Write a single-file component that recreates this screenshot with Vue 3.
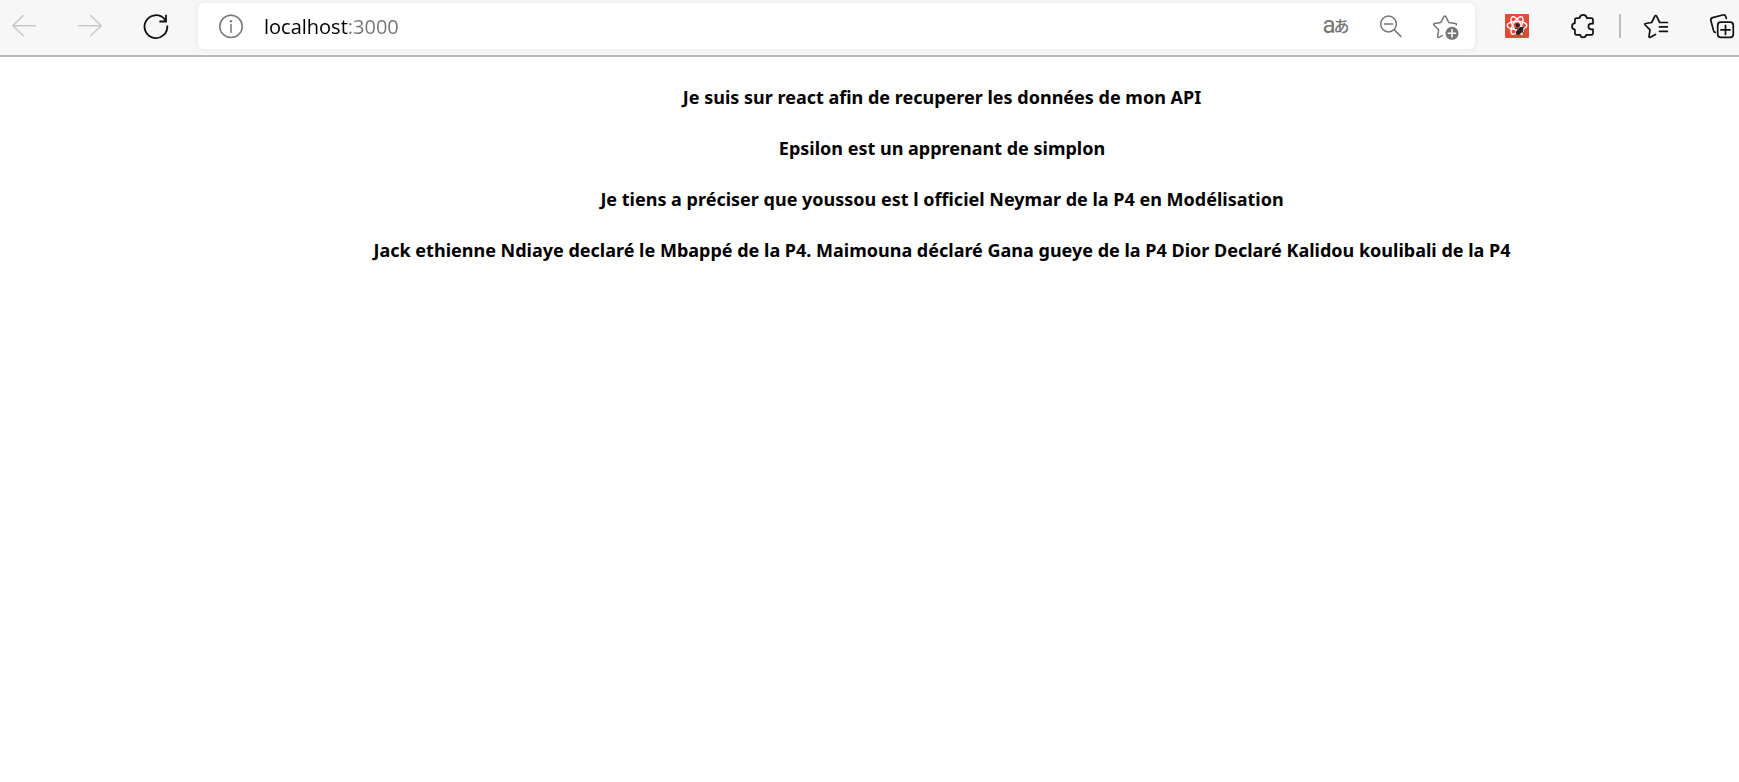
<script setup>
import { ref } from 'vue'

const address = ref('localhost:3000')

const messages = [
  'Je suis sur react afin de recuperer les données de mon API',
  'Epsilon est un apprenant de simplon',
  'Je tiens a préciser que youssou est l officiel Neymar de la P4 en Modélisation',
  'Jack ethienne Ndiaye declaré le Mbappé de la P4. Maimouna déclaré Gana gueye de la P4 Dior Declaré Kalidou koulibali de la P4',
]
</script>

<template>
  <div class="browser">
    <header class="toolbar">
      <nav class="history" aria-label="Navigation">
        <button type="button" class="tool" disabled aria-label="Back">
          <svg class="icon" viewBox="0 0 24 24"><path d="M23.5 11.7H.7M11.3 1.5.7 11.7l10.6 10" /></svg>
        </button>
        <button type="button" class="tool" disabled aria-label="Forward">
          <svg class="icon" viewBox="0 0 24 24"><path d="M.5 11.7h22.8M12.7 1.5l10.6 10.2-10.6 10" /></svg>
        </button>
        <button type="button" class="tool" aria-label="Refresh">
          <svg class="icon reload" viewBox="0 0 24 24">
            <path d="M23.3 11.5A11.4 11.4 0 1 1 20.6 5.2L22 7.3M22 .8v6.7h-6.6" />
          </svg>
        </button>
      </nav>

      <form class="omnibox" @submit.prevent>
        <button type="button" class="tool" aria-label="View site information">
          <svg class="icon info" viewBox="0 0 24 24">
            <circle cx="12" cy="12.4" r="11.2" /><path d="M12 10.5v7.8" /><circle class="dot" cx="12" cy="7.3" r="1.2" />
          </svg>
        </button>
        <input v-model="address" class="address" type="text" aria-label="Address" spellcheck="false" />
        <button type="button" class="tool translate" aria-label="Translate">
          <span class="latin">a</span><span class="kana">あ</span>
        </button>
        <button type="button" class="tool" aria-label="Zoom out">
          <svg class="icon" viewBox="0 0 24 24"><circle cx="9.5" cy="10" r="7.9" /><path d="M5.3 10h8.4M15.2 15.8l6.6 6.6" /></svg>
        </button>
        <button type="button" class="tool" aria-label="Add this page to favorites">
          <svg class="icon wide" viewBox="0 0 26 24">
            <path d="M9.2 21.6 6 23.4c-.8.4-1.5-.1-1.4-1l1-6.6-4.7-4.9c-.6-.6-.3-1.3.5-1.5l6.5-1 3.1-6c.4-.7 1.3-.7 1.7 0l3 6 6.7 1c.9.1 1.3.8.8 1.5" />
            <circle class="badge" cx="19" cy="19.3" r="6.5" /><path class="plus" d="M19 15.6V23M15.3 19.3h7.4" />
          </svg>
        </button>
      </form>

      <div class="extensions">
        <button type="button" class="tool" aria-label="React Developer Tools">
          <svg class="react" viewBox="0 0 24 24">
            <rect width="24" height="24" rx="1" fill="#dd4b39" />
            <g fill="none" stroke="#fff" stroke-width="1.4">
              <ellipse cx="12" cy="11.5" rx="9.9" ry="4" />
              <ellipse cx="12" cy="11.5" rx="9.9" ry="4" transform="rotate(60 12 11.5)" />
              <ellipse cx="12" cy="11.5" rx="9.9" ry="4" transform="rotate(120 12 11.5)" />
            </g>
            <g fill="#222" stroke="#222">
              <circle cx="12.6" cy="11.2" r="1.6" />
              <ellipse cx="14.6" cy="16.8" rx="1.9" ry="4.2" transform="rotate(40 14.6 16.8)" />
              <path fill="none" d="M10 14.7l3-.2M16.3 13.5h2.6M17 16.5l1.6 3.3M13.500 18.500l1.700 2.700" />
            </g>
          </svg>
        </button>
        <button type="button" class="tool" aria-label="Extensions">
          <svg class="icon dark" viewBox="0 0 24 24">
            <path d="M8.5 4.2C8.8 2.2 10.2.9 12.2.9s3.4 1.3 3.7 3.3h4.3c1.1 0 1.8.7 1.8 1.8v3.7h-1.5c-1.8 0-3.1 1.1-3.1 2.8s1.3 2.8 3.1 2.8H22V19c0 1.1-.7 1.8-1.8 1.8h-5c-.3 1.5-1.5 2.5-3 2.5s-2.7-1-3-2.5H5.7c-1.1 0-1.8-.7-1.8-1.8v-3.4C2 15.2 1 14 1 12.400s1-2.900 2.900-3.200V6c0-1.100.7-1.800 1.800-1.800z" />
          </svg>
        </button>
      </div>
      <span class="divider"></span>
      <div class="extensions">
        <button type="button" class="tool" aria-label="Favorites">
          <svg class="icon dark" viewBox="0 0 24 24">
            <path d="M11.5 20.4 6.4 23.2c-.8.4-1.5 0-1.4-.9l1-6.4L1.2 11c-.6-.6-.4-1.4.5-1.5l6-1 3.1-6.3c.4-.8 1.4-.8 1.8 0l3.1 6.3h7.8M15.5 12.9h7.8M15.500 17.400h7.800" />
          </svg>
        </button>
        <button type="button" class="tool" aria-label="Collections">
          <svg class="icon dark" viewBox="0 0 24 24">
            <path d="M5.3 18.4c-.9-.3-1.5-1-1.8-2L.9 6.7C.5 5.2 1.2 4 2.7 3.6l10-2.6c1.5-.4 2.7.2 3.2 1.7l.4 1.7" />
            <rect x="7.7" y="8.2" width="15.6" height="15.2" rx="3.2" /><path d="M15.5 11.3v9.2M10.9 15.9h9.2" />
          </svg>
        </button>
      </div>
    </header>

    <main class="page">
      <h4 v-for="message in messages" :key="message" class="message">{{ message }}</h4>
    </main>
  </div>
</template>

<style>
body {
  margin: 0;
  background: #fff;
}
</style>

<style scoped>
.browser {
  min-height: 100vh;
  color: #000;
  font-family: 'Segoe UI', 'Noto Sans', 'Noto Sans CJK JP', sans-serif;
}

.toolbar {
  display: flex;
  align-items: center;
  padding: 3px 5px 6px 12px;
  border-bottom: 2px solid #b9b9b9;
  background: #f7f7f7;
}

.history,
.extensions {
  display: flex;
  align-items: center;
  gap: 42px;
}

.tool {
  display: flex;
  flex: none;
  align-items: center;
  padding: 0;
  border: 0;
  background: none;
  color: #757575;
}

.history .tool,
.extensions .tool {
  color: #111;
}

.history .tool:disabled {
  color: #c9c9c9;
}

.icon,
.react {
  display: block;
  width: 24px;
  height: 24px;
}

.icon {
  overflow: visible;
  fill: none;
  stroke: currentColor;
  stroke-width: 1.5;
  stroke-linecap: round;
  stroke-linejoin: round;
}

.icon.wide {
  width: 26px;
}

.icon.dark {
  stroke-width: 1.7;
}

.icon.reload {
  stroke-width: 1.8;
  stroke-linecap: butt;
  stroke-linejoin: miter;
}

.dot,
.badge {
  fill: currentColor;
  stroke: none;
}

.plus {
  stroke: #fff;
}

.omnibox {
  display: flex;
  flex: 1;
  align-items: center;
  gap: 30px;
  min-width: 0;
  height: 46px;
  margin: 0 30px;
  padding: 0 16px 0 21px;
  box-sizing: border-box;
  border-radius: 6px;
  background: #fff;
  box-shadow: 0 0 6px rgba(0, 0, 0, 0.08);
}

.address {
  flex: 1;
  min-width: 0;
  margin-left: -9px;
  padding: 2px 0 0;
  border: 0;
  outline: 0;
  background: linear-gradient(to right, #000 84px, #757575 84px);
  background-clip: text;
  color: transparent;
  caret-color: #000;
  font: 20px/30px 'Segoe UI', 'Open Sans', sans-serif;
}

.translate {
  justify-content: center;
  width: 26px;
  height: 24px;
  padding-bottom: 2px;
}

.latin {
  font: 24px/24px Roboto, sans-serif;
}

.kana {
  margin-left: -2px;
  font: 500 16px/24px 'Noto Sans CJK JP', sans-serif;
}

.divider {
  width: 2px;
  height: 24px;
  margin: 0 23px 0 24px;
  background: #bdbdbd;
}

.page {
  display: grid;
  gap: 24px;
  padding: 27px 0 24px 145px;
}

.message {
  margin: 0;
  font-size: 18px;
  font-weight: 700;
  line-height: 27px;
  text-align: center;
}
</style>
